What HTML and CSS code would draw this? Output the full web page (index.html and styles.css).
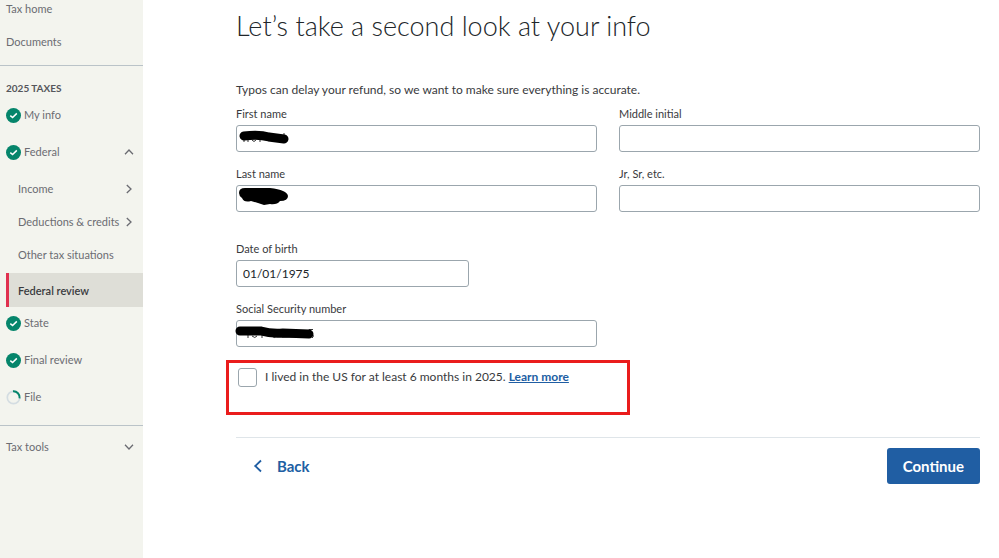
FILE: index.html
```html
<!DOCTYPE html>
<html lang="en">
  <head>
    <meta charset="UTF-8" />
    <meta name="viewport" content="width=device-width, initial-scale=1.0" />
    <link rel="stylesheet" href="styles.css">
    <title>Federal review</title>
  </head>
  <body>
    <svg class="symbols" aria-hidden="true">
      <symbol id="check" viewBox="0 0 15 15">
        <circle cx="7.5" cy="7.5" r="7.5" fill="#05856b" />
        <path d="M4.3 7.6 L6.6 9.6 L10.8 5.4" fill="none" stroke="#fff" stroke-width="1.5" />
      </symbol>
      <symbol id="chevron" viewBox="0 0 10 10">
        <path d="M2.8 1 L7 5 L2.8 9" fill="none" stroke="currentColor" stroke-width="1.3" />
      </symbol>
    </svg>

    <div class="page">
      <nav class="sidebar">
        <div class="nav-top">
          <a class="nav-link" href="#">Tax home</a>
          <a class="nav-link" href="#">Documents</a>
        </div>

        <div class="nav-taxes">
          <h2 class="nav-title">2025 TAXES</h2>
          <div class="nav-group">
            <a class="nav-link" href="#"><svg class="icon"><use href="#check" /></svg>My info</a>
            <a class="nav-link" href="#"><svg class="icon"><use href="#check" /></svg>Federal<svg class="chevron up"><use href="#chevron" /></svg></a>
          </div>
          <div class="sub-nav">
            <a class="sub-link" href="#">Income<svg class="chevron"><use href="#chevron" /></svg></a>
            <a class="sub-link" href="#">Deductions &amp; credits<svg class="chevron"><use href="#chevron" /></svg></a>
            <a class="sub-link" href="#">Other tax situations</a>
            <a class="sub-link active" href="#" aria-current="page">Federal review</a>
          </div>
          <div class="nav-group">
            <a class="nav-link" href="#"><svg class="icon"><use href="#check" /></svg>State</a>
            <a class="nav-link" href="#"><svg class="icon"><use href="#check" /></svg>Final review</a>
            <a class="nav-link" href="#">
              <svg class="icon" viewBox="0 0 15 15">
                <circle cx="7.5" cy="7.5" r="6.2" fill="none" stroke="#d4dde2" stroke-width="1.7" />
                <path d="M7 1.3 A6.2 6.2 0 0 1 13.6 8.3" fill="none" stroke="#05856b" stroke-width="1.9" />
              </svg>File</a>
          </div>
        </div>

        <div class="nav-tools">
          <a class="nav-link" href="#">Tax tools<svg class="chevron down"><use href="#chevron" /></svg></a>
        </div>
      </nav>

      <main class="content">
        <h1>Let’s take a second look at your info</h1>
        <p class="intro">Typos can delay your refund, so we want to make sure everything is accurate.</p>

        <form>
          <div class="form-grid">
            <div class="field">
              <label for="first-name">First name</label>
              <div class="input-wrap">
                <input type="text" id="first-name" />
                <svg class="scribble" viewBox="0 0 90 27" aria-hidden="true">
                  <path d="M8 15 V17 M12 15 V17 M16 15 Q18 18 20 15 M24 15 V17 M48 8 V12" fill="none" stroke="#333" />
                  <path d="M8 11 Q23 9 33 12 L48 14" fill="none" stroke="#000" stroke-width="9" stroke-linecap="round" />
                </svg>
              </div>
            </div>
            <div class="field">
              <label for="middle">Middle initial</label>
              <input type="text" id="middle" />
            </div>
            <div class="field">
              <label for="last-name">Last name</label>
              <div class="input-wrap">
                <input type="text" id="last-name" />
                <svg class="scribble" viewBox="0 0 90 27" aria-hidden="true">
                  <path d="M3 8 Q3 3 9 3 L34 3 Q51 5 52 11 Q52 16 44 16 Q41 20 34 19 L28 20 L22 18 L15 16 Q8 18 6 13 Q3 11 3 8 Z" />
                </svg>
              </div>
            </div>
            <div class="field">
              <label for="suffix">Jr, Sr, etc.</label>
              <input type="text" id="suffix" />
            </div>
          </div>

          <div class="form-grid">
            <div class="field short">
              <label for="dob">Date of birth</label>
              <input type="text" id="dob" value="01/01/1975" />
            </div>
            <div class="field start">
              <label for="ssn">Social Security number</label>
              <div class="input-wrap">
                <input type="text" id="ssn" />
                <svg class="scribble" viewBox="0 0 90 27" aria-hidden="true">
                  <path d="M12 13 V18 M16 16 Q19 19 21 16 M26 14 V18 M36 16 Q38 19 41 16 M46 17 H60 M77 9.5 H73 V15 M77 15 Q78 17 76 18" fill="none" stroke="#333" />
                  <path d="M4 11 L25 11 Q35 14 47 13 L73 14" fill="none" stroke="#000" stroke-width="9" stroke-linecap="round" />
                </svg>
              </div>
            </div>
          </div>

          <div class="highlight">
            <input type="checkbox" id="lived" />
            <label for="lived">I lived in the US for at least 6 months in 2025.</label>
            <a class="learn-more" href="#">Learn more</a>
          </div>

          <div class="actions">
            <button type="button" class="back-btn">
              <svg viewBox="0 0 10 14" aria-hidden="true"><path d="M8 1.5 L2.2 7 L8 12.5" fill="none" stroke="currentColor" stroke-width="1.8" /></svg>
              Back
            </button>
            <button type="submit" class="continue-btn">Continue</button>
          </div>
        </form>
      </main>
    </div>
  </body>
</html>
```

FILE: styles.css
```css
* {
  box-sizing: border-box;
}

body {
  margin: 0;
  font-family: Lato, "Open Sans", sans-serif;
  font-size: 12px;
  color: #393a3d;
  background-color: #fff;
}

.symbols {
  display: none;
}

.page {
  display: flex;
  min-height: 100vh;
}

/* sidebar */
.sidebar {
  flex: 0 0 143px;
  background-color: #f3f4ee;
  font-size: 11px;
  color: #6b6c72;
}

.nav-top {
  display: flex;
  flex-direction: column;
  gap: 15px;
  padding: 0 0 14px 6px;
  border-bottom: 1px solid #bac3c8;
}

.nav-link {
  display: flex;
  align-items: center;
  gap: 3px;
  line-height: 18px;
  color: inherit;
  text-decoration: none;
}

.nav-taxes {
  padding: 13px 0 19px 6px;
  border-bottom: 1px solid #bac3c8;
}

.nav-title {
  margin: 0 0 9px;
  line-height: 18px;
  font-size: 10px;
  color: #55565b;
}

.nav-group {
  display: flex;
  flex-direction: column;
  gap: 19px;
}

.icon {
  width: 15px;
  height: 15px;
}

.chevron {
  width: 10px;
  height: 10px;
  margin-left: auto;
  margin-right: 9px;
}

.up {
  transform: rotate(-90deg);
}

.down {
  transform: rotate(90deg);
}

.sub-nav {
  margin: 11px 0 7px;
}

.sub-link {
  display: flex;
  align-items: center;
  height: 33px;
  padding-left: 12px;
  color: inherit;
  text-decoration: none;
}

.sub-link.active {
  height: 34px;
  margin-top: 2px;
  padding-left: 9px;
  border-left: 3px solid #e0314f;
  background-color: #deded7;
  color: #393a3d;
  font-weight: 600;
}

.nav-tools {
  padding: 12px 0 12px 6px;
}

/* main content */
.content {
  flex: 1;
  padding: 8px 19px 24px 93px;
}

h1 {
  margin: 0;
  line-height: 36px;
  font-size: 27px;
  font-weight: 300;
  color: #21262a;
}

.intro {
  margin: 37px 0 7px;
  line-height: 18px;
}

.form-grid {
  display: grid;
  grid-template-columns: 1fr 1fr;
  column-gap: 22px;
  row-gap: 14px;
  margin-bottom: 29px;
}

.field label {
  display: block;
  margin-bottom: 4px;
  line-height: 15px;
  font-size: 11px;
}

.field input {
  display: block;
  width: 100%;
  height: 27px;
  padding: 0 6px;
  border: 1px solid #9ba6ad;
  border-radius: 3px;
  background-color: #fff;
  font: inherit;
  font-size: 12px;
  color: #21262a;
}

.start,
.short {
  grid-column: 1;
}

.short input {
  width: calc(65% - 2px);
}

.input-wrap {
  position: relative;
}

.scribble {
  position: absolute;
  top: 0;
  left: 0;
  width: 90px;
  height: 27px;
  pointer-events: none;
  overflow: visible;
}

.highlight {
  display: flex;
  align-items: flex-start;
  width: calc(50% + 32px);
  height: 55px;
  margin: -16px 0 22px -10px;
  padding: 5px 9px;
  border: 3px solid #ea1c1c;
  line-height: 18px;
}

.highlight input {
  appearance: none;
  flex: none;
  width: 19px;
  height: 19px;
  margin: 0 8px 0 0;
  border: 1px solid #9ba6ad;
  border-radius: 3px;
  background-color: #fff;
}

.highlight input:checked {
  background-color: #205ea3;
}

.learn-more {
  margin-left: 3px;
  color: #205ea3;
  font-weight: 700;
}

.actions {
  display: flex;
  justify-content: space-between;
  padding-top: 10px;
  border-top: 1px solid #dfe5e9;
}

.actions button {
  height: 36px;
  border: none;
  border-radius: 3px;
  font-family: inherit;
  font-size: 15px;
  font-weight: 700;
  cursor: pointer;
}

.back-btn {
  display: flex;
  align-items: center;
  gap: 14px;
  padding: 0 17px;
  background-color: transparent;
  color: #205ea3;
}

.back-btn svg {
  width: 10px;
  height: 14px;
}

.continue-btn {
  padding: 0 16px;
  background-color: #205ea3;
  color: #fff;
}

.continue-btn:hover {
  background-color: #184a82;
}
```
